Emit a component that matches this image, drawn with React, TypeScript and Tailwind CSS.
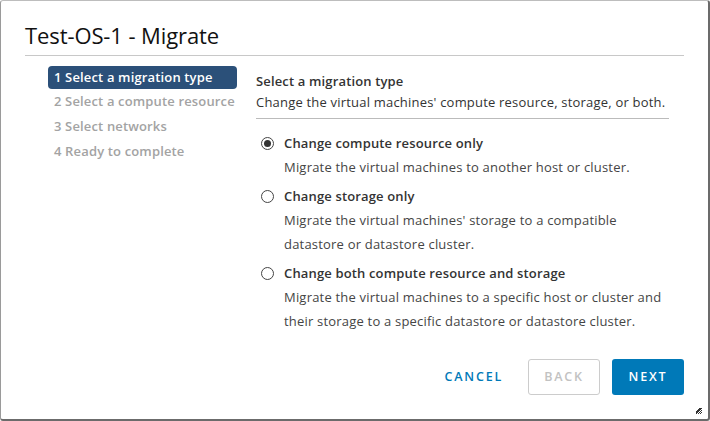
import React from "react";

const font = { fontFamily: '"Open Sans", "Noto Sans", sans-serif' };

function Radio({ checked }: { checked?: boolean }) {
  return (
    <span className="mt-[1px] flex h-[13px] w-[13px] shrink-0 items-center justify-center rounded-full border border-[#444] bg-white">
      {checked && <span className="h-[7px] w-[7px] rounded-full bg-[#333]" />}
    </span>
  );
}

export default function App() {
  const options = [
    {
      label: "Change compute resource only",
      desc: ["Migrate the virtual machines to another host or cluster."],
      checked: true,
    },
    {
      label: "Change storage only",
      desc: ["Migrate the virtual machines' storage to a compatible", "datastore or datastore cluster."],
    },
    {
      label: "Change both compute resource and storage",
      desc: [
        "Migrate the virtual machines to a specific host or cluster and",
        "their storage to a specific datastore or datastore cluster.",
      ],
    },
  ];
  return (
    <div style={font} className="relative h-[421px] w-[710px] overflow-hidden rounded-[3px] border-t border-l border-r-2 border-b-2 border-t-[#bdbdbd] border-l-[#9a9a9a] border-r-[#6b6b6b] border-b-[#6b6b6b] bg-white">
      <div className="px-[24px] pt-[20px]">
        <div className="border-b border-[#c8c8c8] pb-[6px] text-[22px] leading-[28px] text-[#111] tracking-[-0.1px]">
          Test-OS-1 - Migrate
        </div>
      </div>
      <div className="flex pl-[47px] pt-[10px]">
        <div className="flex w-[189px] flex-col gap-[1px]">
          <div className="rounded-[4px] bg-[#2b5079] px-[6px] text-[13px] font-semibold leading-[23px] tracking-[0.15px] text-white">
            1 Select a migration type
          </div>
          <div className="px-[6px] text-[13px] font-semibold leading-[23px] tracking-[0.15px] text-[#a3a3a3] whitespace-nowrap">2 Select a compute resource</div>
          <div className="px-[6px] text-[13px] font-semibold leading-[24px] tracking-[0.15px] text-[#a3a3a3]">3 Select networks</div>
          <div className="px-[6px] text-[13px] font-semibold leading-[24px] tracking-[0.15px] text-[#a3a3a3]">4 Ready to complete</div>
        </div>
        <div className="ml-[19px] w-[413px] pt-[4px]">
          <div className="text-[13px] font-semibold leading-[22px] tracking-[0.15px] text-[#333]">Select a migration type</div>
          <div className="border-b border-[#bbb] pb-[6px] text-[13px] leading-[20px] tracking-[0.2px] text-[#333] whitespace-nowrap">
            Change the virtual machines' compute resource, storage, or both.
          </div>
          <div className="flex flex-col gap-[5px] pl-[5px] pt-[12px]">
            {options.map((o) => (
              <div key={o.label} className="flex flex-col">
                <div className="flex items-center gap-[10px]">
                  <Radio checked={o.checked} />
                  <span className="text-[13px] font-semibold leading-[24px] tracking-[0.15px] text-[#333]">{o.label}</span>
                </div>
                {o.desc.map((d) => (
                  <div key={d} className="pl-[23px] text-[13px] leading-[24px] tracking-[0.2px] text-[#454545] whitespace-nowrap">
                    {d}
                  </div>
                ))}
              </div>
            ))}
          </div>
        </div>
      </div>
      <div className="absolute bottom-[24px] right-[24px] flex items-center">
        <button className="mr-[13px] h-[36px] px-[12px] text-[12.5px] font-semibold tracking-[1.8px] text-[#0079b8]">CANCEL</button>
        <button className="mr-[12px] h-[36px] w-[72px] rounded-[3px] border border-[#ccc] text-[12.5px] font-semibold tracking-[1.8px] text-[#c2c2c2]">BACK</button>
        <button className="h-[36px] w-[72px] rounded-[3px] bg-[#0079b8] text-[12.5px] font-semibold tracking-[1.8px] text-white">NEXT</button>
      </div>
      <svg className="absolute bottom-[4px] right-[5px]" width="8" height="8" viewBox="0 0 8 8">
        <path d="M7 1 L1 7 M7 3 L3 7 M7 5 L5 7 M6 1 L1 6 M5 1 L1 5" stroke="#333" strokeWidth="1" />
      </svg>
    </div>
  );
}
